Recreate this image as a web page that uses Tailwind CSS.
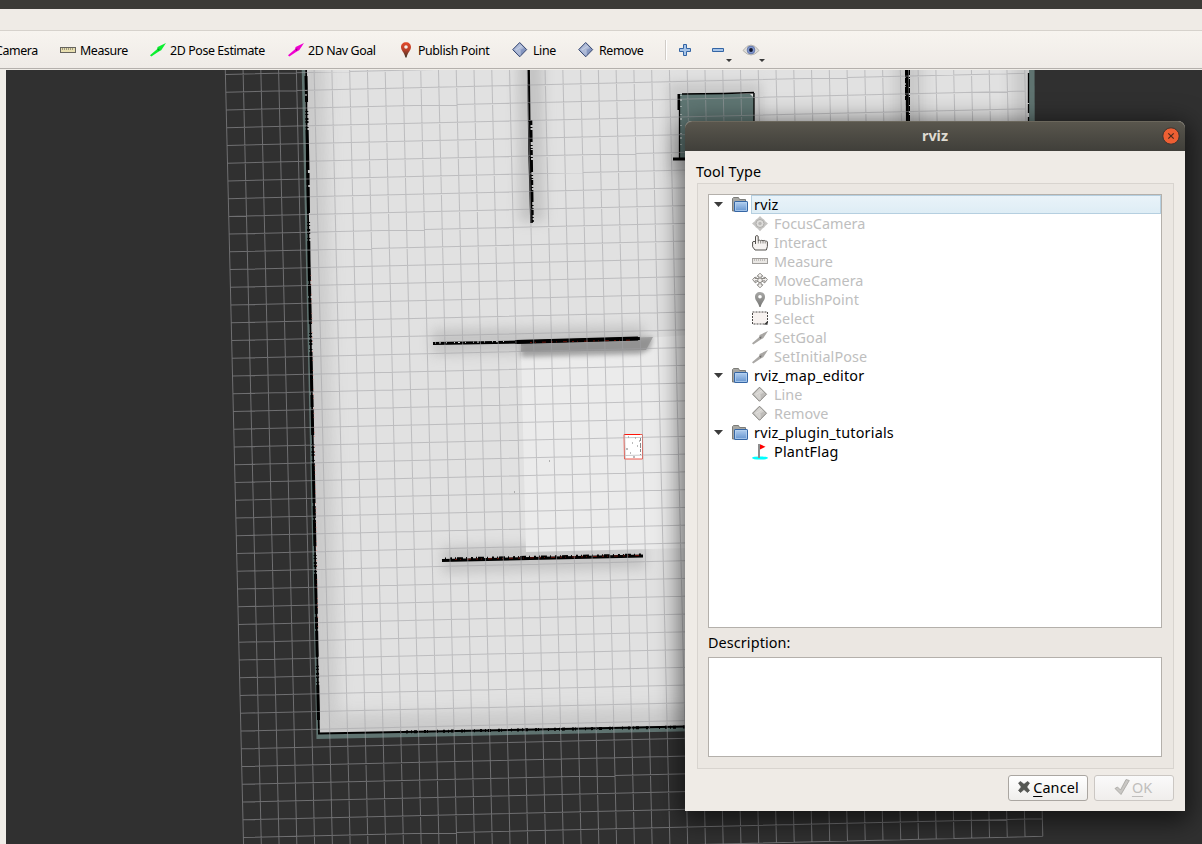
<!DOCTYPE html>
<html lang="en">
<head>
<meta charset="utf-8">
<title>rviz</title>
<script src="https://cdn.jsdelivr.net/npm/@tailwindcss/browser@4"></script>
</head>
<body class="h-[844px] w-[1202px] overflow-hidden bg-[#f0ede8] font-['Noto_Sans',sans-serif] text-black">
<svg width="0" height="0" class="absolute">
  <defs>
    <linearGradient id="dg" x1="0" y1="0" x2="1" y2="1"><stop offset="0" stop-color="#a9b6d6"/><stop offset=".5" stop-color="#8fa0c8"/><stop offset="1" stop-color="#6f80ae"/></linearGradient>
    <linearGradient id="pg" x1="0" y1="0" x2="0" y2="1"><stop offset="0" stop-color="#e4492a"/><stop offset=".5" stop-color="#b8402a"/><stop offset="1" stop-color="#3c3426"/></linearGradient>
    <linearGradient id="gg" x1="0" y1="0" x2="0" y2="1"><stop offset="0" stop-color="#a8a8a6"/><stop offset="1" stop-color="#777775"/></linearGradient>
    <linearGradient id="fg" x1="0" y1="0" x2="0" y2="1"><stop offset="0" stop-color="#b4d0f0"/><stop offset="1" stop-color="#6393cf"/></linearGradient>
    <symbol id="ruler" viewBox="0 0 16 16"><rect x=".5" y="5.500" width="15" height="5" fill="#e8dfb0" stroke="#66645e"/><path d="M2.500 6v2M4.500 6v2M6.500 6v2M8.500 6v2M10.500 6v2M12.500 6v2" stroke="#8c8771" stroke-width=".8"/></symbol>
    <symbol id="rulerg" viewBox="0 0 16 16"><rect x=".5" y="4.500" width="15" height="5" fill="#e9e7e4" stroke="#a09e9b"/><path d="M2.500 5v2M4.500 5v2M6.500 5v2M8.500 5v2M10.500 5v2M12.500 5v2" stroke="#b5b2ae" stroke-width=".8"/></symbol>
    <symbol id="arrow" viewBox="0 0 16 16"><path d="M0 13.200 7 7.200 7.600 5 16 1 11.200 8.200 8.800 9.400 1.300 14.600z" fill="currentColor"/><path d="M7.200 7 9.600 6.600 8.800 9z" fill="#000" opacity=".35"/></symbol>
    <symbol id="diamond" viewBox="0 0 16 16"><path d="M7.700 .5 14.700 7.600 7.700 14.800 .7 7.600z" fill="url(#dg)" stroke="#36466f"/><path d="M7.700 1.500 12 6 8 8 7 13.500 2 7.600z" fill="#c3ccdf" opacity=".6"/><path d="M4 8 10 4M8 8v5.500" stroke="#ccd5e8" stroke-width=".8"/></symbol>
    <symbol id="diamondg" viewBox="0 0 16 16"><path d="M7.500 .2 14.500 7.200 7.500 14.300 .5 7.200z" fill="#bfbdba" stroke="#85837f"/><path d="M7.500 1.200 12 5.500 8 7.500 7 13 2 7.200z" fill="#dddbd8" opacity=".7"/><path d="M4 7.500 10 3.500M8 7.500v5.500" stroke="#e4e2df" stroke-width=".8"/></symbol>
    <symbol id="pin" viewBox="0 0 16 16"><path fill-rule="evenodd" d="M8 .2C5 .2 3 2.300 3 5.100 3 8.600 6.400 10.500 7.400 15.500h1.200C9.600 10.500 13 8.600 13 5.100 13 2.300 11 .2 8 .2zM8 3.200a1.800 1.800 0 1 1 0 3.600 1.800 1.800 0 0 1 0-3.600z" fill="url(#pg)"/></symbol>
    <symbol id="ping" viewBox="0 0 16 16"><path fill-rule="evenodd" d="M8 0C5 0 3 2.100 3 4.900 3 8.400 6.400 10.300 7.400 15h1.200C9.600 10.300 13 8.400 13 4.900 13 2.100 11 0 8 0zM8 3a1.800 1.800 0 1 1 0 3.600 1.800 1.800 0 0 1 0-3.600z" fill="url(#gg)"/></symbol>
    <symbol id="folder" viewBox="0 0 16 16"><path d="M.5 14V1.500L1.500.5h5l1 2h6v11z" fill="#a7a7a3" stroke="#7c7c78"/><rect x="2.500" y="4.500" width="13" height="10" rx=".6" fill="url(#fg)" stroke="#3465a4"/><path d="M3.500 5.500h11v8h-11z" fill="none" stroke="#b9d4f0" stroke-width=".7"/></symbol>
    <symbol id="focus" viewBox="0 0 16 16"><path d="M8 0 10.500 2.600A6 6 0 0 1 13.200 5.200L16 7.500 13.200 9.900A6 6 0 0 1 10.500 12.500L8 15.200 5.500 12.500A6 6 0 0 1 2.800 9.900L0 7.500 2.800 5.200A6 6 0 0 1 5.500 2.600z" fill="#c6c5c3"/><circle cx="8" cy="7.500" r="4" fill="#dddcda" stroke="#aaa9a7" stroke-width=".9"/><circle cx="8" cy="7.500" r="1.700" fill="#b9b8b6"/></symbol>
    <symbol id="hand" viewBox="0 0 16 16"><path d="M3.500 9V1.300Q5 -.3 6.200 1.300V5.800Q7.500 4.600 8.700 5.700 9.800 4.800 11 5.800 12.200 5 13.200 6 15 5.600 15.400 7V11.500L14.300 15H3L.6 11.800V7Q2 5.500 3.500 7z" fill="#f6f3f1" stroke="#55524e"/><path d="M6.300 6V8.500M8.700 6v2.500M11 6v2.500M13.200 6.500v2" stroke="#77736f" stroke-width=".8"/></symbol>
    <symbol id="move" viewBox="0 0 16 16"><g fill="#f4f2f0" stroke="#86837f" stroke-width=".9"><path d="M8 .2 11 3.200H9.200V5.200H6.800V3.200H5z"/><path d="M8 14.800 11 11.800H9.200V9.800H6.800V11.800H5z"/><path d="M.6 6.500 3 4V5.500H13V4L15.400 6.500 13 9.500V7.800H3V9.500z"/><path d="M3 4 13 10M13 4 3 10"/><circle cx="8" cy="7.300" r="2.300"/></g></symbol>
    <symbol id="select" viewBox="0 0 16 16"><rect x=".5" y="1" width="15" height="12" fill="#f8f3f1" stroke="#4c4a48" stroke-dasharray="2 1"/><path d="M15.500 10V13.500H12z" fill="#333"/></symbol>
    <symbol id="flag" viewBox="0 0 16 16"><ellipse cx="8" cy="14" rx="8" ry="1.600" fill="#0ff"/><path d="M6 0h2v14H6z" fill="#8d8d8d"/><path d="M8 .3 13.500 2.700 8 5.500z" fill="#f00"/></symbol>
  </defs>
</svg>

<div class="flex h-full flex-col">
  <div class="h-[9px] shrink-0 bg-[#3c3b37]"></div>
  <div class="h-[22px] shrink-0 border-b border-[#d6d2cc] bg-[#efebe6]"></div>
  <div class="flex h-[38px] shrink-0 items-center border-b border-[#b4b0ac] bg-linear-to-b from-[#f7f4ef] to-[#efebe7] text-[12.400px] leading-[16px] tracking-[-0.390px] whitespace-nowrap">
    <div class="w-[60px] pt-[2px]"><span class="-ml-[5px]">Camera</span></div>
    <div class="flex w-[90px] items-center gap-1"><svg class="size-4"><use href="#ruler"/></svg><span class="pt-[2px]">Measure</span></div>
    <div class="flex w-[138px] items-center gap-1"><svg class="size-4 text-[#0bf030]"><use href="#arrow"/></svg><span class="pt-[2px]">2D Pose Estimate</span></div>
    <div class="flex w-[110px] items-center gap-1"><svg class="size-4 text-[#f000d0]"><use href="#arrow"/></svg><span class="pt-[2px]">2D Nav Goal</span></div>
    <div class="flex w-[114px] items-center gap-1"><svg class="size-4"><use href="#pin"/></svg><span class="pt-[2px]">Publish Point</span></div>
    <div class="flex w-[66px] items-center gap-[5px]"><svg class="size-4"><use href="#diamond"/></svg><span class="pt-[2px]">Line</span></div>
    <div class="flex w-[87px] items-center gap-[5px]"><svg class="size-4"><use href="#diamond"/></svg><span class="pt-[2px]">Remove</span></div>
    <div class="h-5 w-[2px] border-l border-[#d0ccc7] bg-white"></div>
    <svg class="ml-[11px]" width="90" height="24" viewBox="678 38 90 24">
      <path d="M683.500 44.500h3v4h4v3h-4v4h-3v-4h-4v-3h4z" fill="#a6c4e8" stroke="#3465a4"/>
      <path d="M712.500 48.500h11v3h-11z" fill="#a6c4e8" stroke="#3465a4"/>
      <path d="M726 59h6l-3 3zM759 59h6l-3 3z" fill="#3a3a3a"/>
      <path d="M743 50.500Q747 45 751 45T759 50.500Q755 55 751 55T743 50.500z" fill="#deddd9" stroke="#aaa7a2" stroke-width=".8"/>
      <circle cx="751" cy="50" r="3.900" fill="#8197cc"/><circle cx="751" cy="50" r="3.900" fill="none" stroke="#5367a0" stroke-width=".7"/><circle cx="751" cy="50" r="1.900" fill="#11162e"/>
    </svg>
  </div>
  <div class="relative ml-[6px] mt-px flex-1 overflow-hidden bg-[#303030]">
    <svg width="1196" height="774" viewBox="6 70 1196 774">
      <defs>
        <clipPath id="room"><path d="M305 60 306.500 170 312 400 319 734 1029 718V60z"/></clipPath>
        <filter id="b5" filterUnits="userSpaceOnUse" x="200" y="0" width="900" height="844"><feGaussianBlur stdDeviation="6"/></filter>
        <filter id="b8" filterUnits="userSpaceOnUse" x="200" y="0" width="900" height="844"><feGaussianBlur stdDeviation="8"/></filter>
        <filter id="b2" filterUnits="userSpaceOnUse" x="200" y="0" width="900" height="844"><feGaussianBlur stdDeviation="2.500"/></filter>
      </defs>
      <path d="M301.500 60 1034.500 60 1037 724 316.500 739z" fill="#5f7370"/>
      <path d="M305 60 306.500 170 312 400 319 734 1029 718V60z" fill="#e1e1e1"/>
      <g clip-path="url(#room)">
        <path d="M305 40 312 400 319 734 1000 720" fill="none" stroke="#b4b4b4" stroke-width="38" opacity=".5" filter="url(#b8)"/>
        <path d="M1027 40v120M908 40v120" stroke="#a8a8a8" stroke-width="28" opacity=".45" filter="url(#b8)"/>
        <path d="M530 40 532 222" stroke="#a8a8a8" stroke-width="26" opacity=".5" filter="url(#b5)"/>
        <path d="M668 82h94v90h-94z" fill="#b0b0b0" opacity=".5" filter="url(#b5)"/>
        <path d="M432 342 645 338M442 560 646 556" stroke="#aaa" stroke-width="26" opacity=".5" filter="url(#b5)"/>
        <path d="M521 346 690 335V548L526 552z" fill="#ebebeb"/>
        <path d="M521 343 645 338 653 337 650 349 640 354 521 357z" fill="#888" opacity=".75" filter="url(#b2)"/>
        <path d="M521 343 653 337 646 350 521 352z" fill="#8b8b8b" opacity=".7"/>
      </g>
      <path d="M679 94H754V160H679z" fill="#5f7673"/>
      <g stroke="#000" fill="none">
        <path d="M306 60 307 170 309 260 312 400 315 550 319 734" stroke-width="1.800"/>
        <path d="M306 76 308 170 309 260 312 400 315 550 318.500 720" stroke-width="3" stroke-dasharray="26 9 1 2 1 3 2 1 2 4 1 2 40 3 12 2"/>
        <path d="M318 733.500 430 731.500 560 729 685 726.500" stroke-width="2"/>
        <path d="M400 732 685 727" stroke-width="3" stroke-dasharray="1 5 2 3 1 2 3 7 2 1 1 9"/>
        <path d="M528.500 60 529.500 150 531.500 223" stroke-width="2.600"/>
        <path d="M531 120 532.500 222" stroke-width="2.600" stroke-dasharray="5 2 1 2 12 3 1 2 1 1"/>
        <path d="M907 60 907.500 125" stroke-width="3"/>
        <path d="M905.500 60v40M909.500 70v52" stroke-width="1" stroke-dasharray="5 2 1 1 8 1"/>
        <path d="M682 94 724 93.500 754 92.500M679.500 94V160M754 93V125" stroke-width="1.300"/>
        <path d="M678.500 94v16" stroke-width="2"/>
        <path d="M673 159h14" stroke-width="3"/>
        <path d="M1028.500 60v70" stroke-width="1.300" stroke-dasharray="9 4 30 1"/>
        <path d="M433 343.500 520 342 640 338.500" stroke-width="3"/>
        <path d="M515 342 638 338.500" stroke-width="4"/>
        <path d="M442 560.500 643 556" stroke-width="3"/>
        <path d="M445 559 643 555" stroke-width="3" stroke-dasharray="1 4 2 3 1 1 6 3"/>
      </g>
      <path d="M435 343 505 341.500M681 95V145M306 90v8" stroke="#e0e0e0" stroke-dasharray="1 3 2 5 1 7"/>
      <path d="M750 94h3v3z" fill="#ddd"/>
      <path d="M530 342.500 635 340M455 559.500 640 555.500" stroke="#8a160a" stroke-width=".9" stroke-dasharray="2 3 1 6 4 5" opacity=".8"/>
      <path d="M311 275 315 460 318 630" fill="none" stroke="#f0776c" stroke-width=".8" stroke-dasharray="1 4 1 3 1 9" opacity=".7"/>
      <path d="M624 434.500H642.500V459H624.500z" fill="#fff" stroke="#f0584c"/>
      <path d="M624 434.500H640" stroke="#ff1408"/>
      <path d="M628 437h1M635 438h1M632 443h1M626 449h2M630 453h1M637 446h1M639 441h1M549 461h1M514 492h1M633 457h2" stroke="#777"/>
      <path d="M640.500 438v17" stroke="#888" stroke-dasharray="3 2 5 1"/>
      <path id="grid" fill="none" stroke="#a0a0a4" opacity=".56" transform="translate(243.800 855.200) rotate(-1.350)"/>
    </svg>
  </div>
</div>

<!-- Add-tool dialog window -->
<div class="absolute left-[685px] top-[121px] flex h-[690px] w-[500px] flex-col rounded-t-[7px] bg-[#efebe6] text-[14.400px] shadow-[0_6px_26px_4px_rgba(0,0,0,0.6)]">
  <div class="relative flex h-[30px] shrink-0 items-center justify-center rounded-t-[7px] border-t border-[#6b675c] bg-linear-to-b from-[#59564d] to-[#403f3a] pb-[2px] text-[14.400px] font-bold text-[#dfdbd2]">rviz
    <svg class="absolute right-[5px] top-[5px]" width="18" height="18"><circle cx="9" cy="9" r="8.200" fill="#ee5f33" stroke="#3a3430"/><path d="M6.300 6.300 11.700 11.700M11.700 6.300 6.300 11.700" stroke="#4a2a1c" stroke-width="1.200"/></svg>
  </div>
  <div class="flex flex-1 flex-col px-[11px] pt-[11px]">
    <div class="h-[21px] leading-[20px] tracking-[0.150px]">Tool Type</div>
    <div class="ml-px flex h-[586px] w-[477px] flex-col border border-[#d8d4cf] bg-[#ebe7e2] px-[10px] pt-[10px]">
      <div class="flex h-[434px] w-[454px] shrink-0 flex-col border border-[#b4b0ab] bg-white leading-[19px] text-[#bebebe]">
        <div class="flex h-[19px] items-center text-black"><svg class="ml-[5px] mr-[9px]" width="9" height="5"><path d="M0 0h9L4.500 5z" fill="#3c3c3c"/></svg><svg class="size-4"><use href="#folder"/></svg><div class="ml-[3px] h-[19px] flex-1 border border-[#b5cfe0] bg-linear-to-b from-[#e9f3f9] to-[#deedf5] pl-[2px] leading-[18px] tracking-[0.200px]">rviz</div></div>
        <div class="ml-[43px] flex h-[19px] items-center gap-[6px]"><svg class="size-4"><use href="#focus"/></svg>FocusCamera</div>
        <div class="ml-[43px] flex h-[19px] items-center gap-[6px]"><svg class="size-4"><use href="#hand"/></svg>Interact</div>
        <div class="ml-[43px] flex h-[19px] items-center gap-[6px]"><svg class="size-4"><use href="#rulerg"/></svg>Measure</div>
        <div class="ml-[43px] flex h-[19px] items-center gap-[6px]"><svg class="size-4"><use href="#move"/></svg>MoveCamera</div>
        <div class="ml-[43px] flex h-[19px] items-center gap-[6px]"><svg class="size-4"><use href="#ping"/></svg>PublishPoint</div>
        <div class="ml-[43px] flex h-[19px] items-center gap-[6px] tracking-[0.100px]"><svg class="size-4"><use href="#select"/></svg>Select</div>
        <div class="ml-[43px] flex h-[19px] items-center gap-[6px] tracking-[0.100px]"><svg class="size-4 text-[#a9a7a4]"><use href="#arrow"/></svg>SetGoal</div>
        <div class="ml-[43px] flex h-[19px] items-center gap-[6px] tracking-[0.100px]"><svg class="size-4 text-[#a9a7a4]"><use href="#arrow"/></svg>SetInitialPose</div>
        <div class="flex h-[19px] items-center tracking-[0.200px] text-black"><svg class="ml-[5px] mr-[9px]" width="9" height="5"><path d="M0 0h9L4.500 5z" fill="#3c3c3c"/></svg><svg class="mr-[6px] size-4"><use href="#folder"/></svg>rviz_map_editor</div>
        <div class="ml-[43px] flex h-[19px] items-center gap-[6px]"><svg class="size-4"><use href="#diamondg"/></svg>Line</div>
        <div class="ml-[43px] flex h-[19px] items-center gap-[6px]"><svg class="size-4"><use href="#diamondg"/></svg>Remove</div>
        <div class="flex h-[19px] items-center tracking-[0.200px] text-black"><svg class="ml-[5px] mr-[9px]" width="9" height="5"><path d="M0 0h9L4.500 5z" fill="#3c3c3c"/></svg><svg class="mr-[6px] size-4"><use href="#folder"/></svg>rviz_plugin_tutorials</div>
        <div class="ml-[43px] flex h-[19px] items-center gap-[6px] tracking-[0.200px] text-black"><svg class="size-4"><use href="#flag"/></svg>PlantFlag</div>
      </div>
      <div class="h-[29px] shrink-0 leading-[29px] tracking-[0.100px]">Description:</div>
      <div class="h-[100px] w-[454px] shrink-0 border border-[#b4b0ab] bg-white"></div>
    </div>
    <div class="mt-[6px] flex justify-end gap-[6px]">
      <div class="flex h-[26px] w-[80px] items-center justify-center gap-[2px] rounded-[3px] border border-[#aaa6a1] bg-linear-to-b from-white to-[#efeeec]"><svg class="-mt-[2px]" width="14" height="14"><path d="M1.500 3 3.500 1.500 7 4.300 10.500 1.500 12.500 3 9.800 7 12.500 10.500 10.500 12.500 7 9.500 3.500 12.500 1.500 10.500 4.300 7z" fill="#555753" stroke="#444" stroke-width=".6"/></svg><div class="tracking-[0.150px]"><span class="underline underline-offset-[3px]">C</span>ancel</div></div>
      <div class="flex h-[26px] w-[80px] items-center justify-center gap-[2px] rounded-[3px] border border-[#cbc7c3] bg-linear-to-b from-[#fafafa] to-[#f0eeec] pr-[2px] text-[#c0bebc]"><svg class="-mt-[2px]" width="16" height="18"><path d="M1 10.500 3.500 9 6.500 12 12 1.500 15.300 2.500 7 16.500z" fill="#c9c7c4" stroke="#a5a3a0" stroke-width=".8"/></svg><div><span class="underline underline-offset-[3px]">O</span>K</div></div>
    </div>
  </div>
</div>
<script>
  // 45 x 45 ground-plane grid
  const n = 45, cx = 17.76, cy = 17.75;
  let d = '';
  for (let i = 0; i <= n; i++) {
    d += `M${i * cx} 0V${-n * cy}M0 ${-i * cy}H${n * cx}`;
  }
  document.getElementById('grid').setAttribute('d', d);
</script>
</body>
</html>
